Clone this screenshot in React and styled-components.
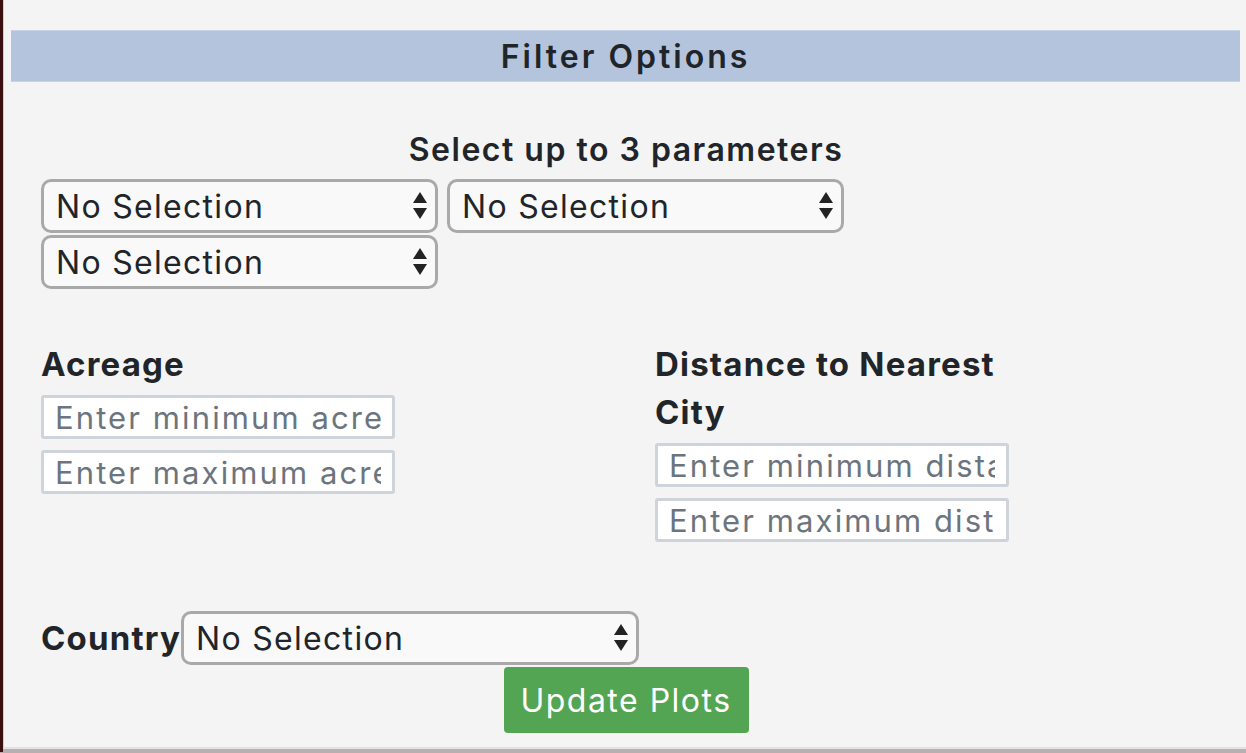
import React from "react";
import styled, { createGlobalStyle } from "styled-components";

const GlobalStyle = createGlobalStyle`
  html, body {
    margin: 0;
    padding: 0;
    background: #b8b0b0;
  }
  body {
    font-family: Inter, "Noto Sans", "Liberation Sans", sans-serif;
    color: #212529;
  }
`;

const Frame = styled.div`
  display: flex;
  width: 1246px;
  height: 752px;
  overflow: hidden;
`;

const Edge = styled.div`
  width: 3px;
  background: #3a0f0f;
  flex: none;
`;

const Panel = styled.div`
  flex: 1;
  height: 749px;
  box-sizing: border-box;
  border-left: 1px solid #cfcfcf;
  border-bottom: 2px solid #e2e2e2;
  background: #f4f4f4;
  padding: 30px 6px 0 7px;
  display: flex;
  flex-direction: column;
`;

const Header = styled.div`
  height: 52px;
  box-sizing: border-box;
  background: #b3c4dc;
  border-top: 1px solid #c9d5e6;
  border-bottom: 1px solid #c9d5e6;
  display: flex;
  align-items: center;
  justify-content: center;
  font-size: 32px;
  font-weight: 600;
  letter-spacing: 3px;
  color: #212529;
`;

const Body = styled.div`
  padding: 0 29px 0 30px;
  display: flex;
  flex-direction: column;
`;

const Subtitle = styled.div`
  margin-top: 50px;
  text-align: center;
  font-size: 32px;
  font-weight: 600;
  letter-spacing: 1.5px;
  line-height: 36px;
`;

const SelectGrid = styled.div`
  margin-top: 11px;
  display: flex;
  flex-wrap: wrap;
  column-gap: 9px;
  row-gap: 2px;
`;

const SelectWrap = styled.div`
  position: relative;
  width: ${(p) => p.width}px;
  height: 54px;
  flex: none;
`;

const Select = styled.select`
  appearance: none;
  -webkit-appearance: none;
  width: 100%;
  height: 100%;
  box-sizing: border-box;
  border: 3px solid #a9a9a9;
  border-radius: 10px;
  background: #f9f9f9;
  padding: 0 40px 0 12px;
  font-family: inherit;
  font-size: 32px;
  letter-spacing: 1.3px;
  color: #212529;
  outline: none;
`;

const Arrow = styled.svg`
  position: absolute;
  right: 10px;
  top: 12px;
  pointer-events: none;
`;

const Columns = styled.div`
  margin-top: 51px;
  display: grid;
  grid-template-columns: 614px 354px;
  align-items: start;
`;

const Field = styled.div`
  display: flex;
  flex-direction: column;
  width: 354px;
`;

const Label = styled.div`
  font-size: 33px;
  font-weight: 700;
  letter-spacing: 1.2px;
  line-height: 48px;
`;

const Inputs = styled.div`
  margin-top: 7px;
  display: flex;
  flex-direction: column;
  gap: 11px;
`;

const Input = styled.input`
  width: 100%;
  height: 44px;
  box-sizing: border-box;
  border: 3px solid #cfd4da;
  border-radius: 3px;
  background: #fff;
  padding: 0 11px;
  font-family: inherit;
  font-size: 31px;
  letter-spacing: 2.1px;
  color: #212529;
  outline: none;
  &::placeholder {
    color: #6c757d;
  }
`;

const CountryRow = styled.div`
  margin-top: 69px;
  display: flex;
  align-items: baseline;
`;

const CountryLabel = styled.span`
  font-size: 33px;
  font-weight: 700;
  letter-spacing: 1.2px;
`;

const ButtonRow = styled.div`
  margin-top: 2px;
  display: flex;
  justify-content: center;
`;

const Button = styled.button`
  width: 245px;
  height: 66px;
  border: none;
  border-radius: 4px;
  background: #53a553;
  color: #fff;
  font-family: inherit;
  font-size: 32px;
  letter-spacing: 1.5px;
  font-weight: 400;
`;

const Chooser = ({ width }) => (
  <SelectWrap width={width}>
    <Select defaultValue="none">
      <option value="none">No Selection</option>
    </Select>
    <Arrow width="16" height="30" viewBox="0 0 16 30">
      <path d="M8 1 L15 12 L1 12 Z" fill="#222" />
      <path d="M1 17 L15 17 L8 28 Z" fill="#222" />
    </Arrow>
  </SelectWrap>
);

export default function App() {
  return (
    <>
      <GlobalStyle />
      <Frame>
        <Edge />
        <Panel>
          <Header>Filter Options</Header>
          <Body>
            <Subtitle>Select up to 3 parameters</Subtitle>
            <SelectGrid>
              <Chooser width={397} />
              <Chooser width={397} />
              <Chooser width={397} />
            </SelectGrid>

            <Columns>
              <Field>
                <Label>Acreage</Label>
                <Inputs>
                  <Input placeholder="Enter minimum acreage" />
                  <Input placeholder="Enter maximum acreage" />
                </Inputs>
              </Field>
              <Field>
                <Label>Distance to Nearest City</Label>
                <Inputs>
                  <Input placeholder="Enter minimum distance" />
                  <Input placeholder="Enter maximum distance" />
                </Inputs>
              </Field>
            </Columns>

            <CountryRow>
              <CountryLabel>Country</CountryLabel>
              <Chooser width={458} />
            </CountryRow>
            <ButtonRow>
              <Button>Update Plots</Button>
            </ButtonRow>
          </Body>
        </Panel>
      </Frame>
    </>
  );
}
